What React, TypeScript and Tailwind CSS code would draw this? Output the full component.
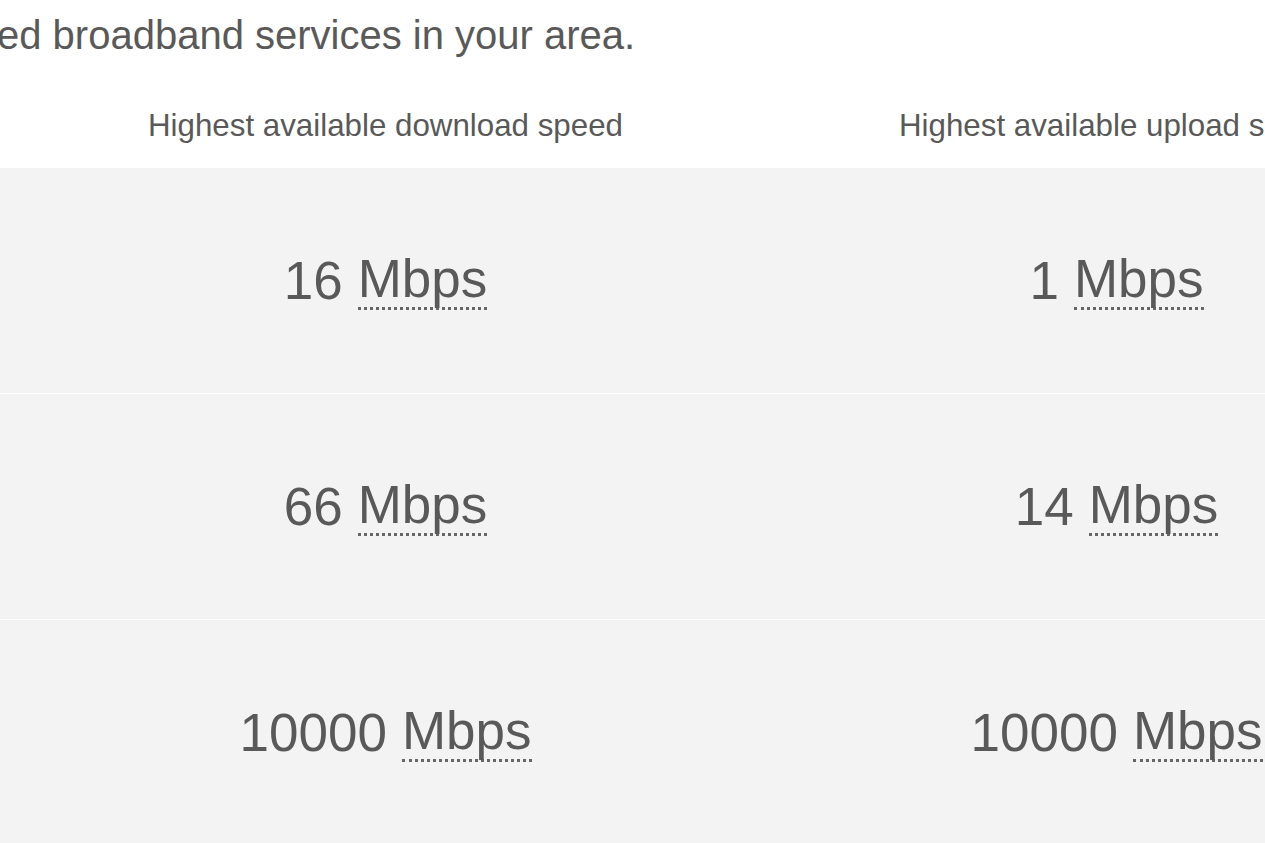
const rows = [
  { down: "16", up: "1" },
  { down: "66", up: "14" },
  { down: "10000", up: "10000" },
];

const Speed = ({ value }: { value: string }) => (
  <div className="flex items-center justify-center text-[53px] leading-none">
    <span>{value}</span>
    <span className="ml-[15px] pb-[2px] border-b-[3px] border-dotted border-[#666]">Mbps</span>
  </div>
);

export default function App() {
  return (
    <div className="w-[1265px] h-[843px] overflow-hidden bg-white text-[#595959] font-['Liberation_Sans',Arial,sans-serif]">
      <p className="ml-[-3px] pt-[12px] h-[88px] text-[40px] leading-[46px] whitespace-nowrap">
        ed broadband services in your area.
      </p>
      <div className="grid grid-cols-[731px_731px] ml-[20px] h-[80px] items-center text-[31.3px] pb-[4px]">
        <div className="text-center whitespace-nowrap">Highest available download speed</div>
        <div className="text-center whitespace-nowrap">Highest available upload speed</div>
      </div>
      <div className="flex flex-col gap-px">
        {rows.map((r, i) => (
          <div key={i} className="bg-[#f3f3f3] h-[225px] shrink-0">
            <div className="grid grid-cols-[731px_731px] ml-[20px] h-full items-center">
              <Speed value={r.down} />
              <Speed value={r.up} />
            </div>
          </div>
        ))}
      </div>
    </div>
  );
}
